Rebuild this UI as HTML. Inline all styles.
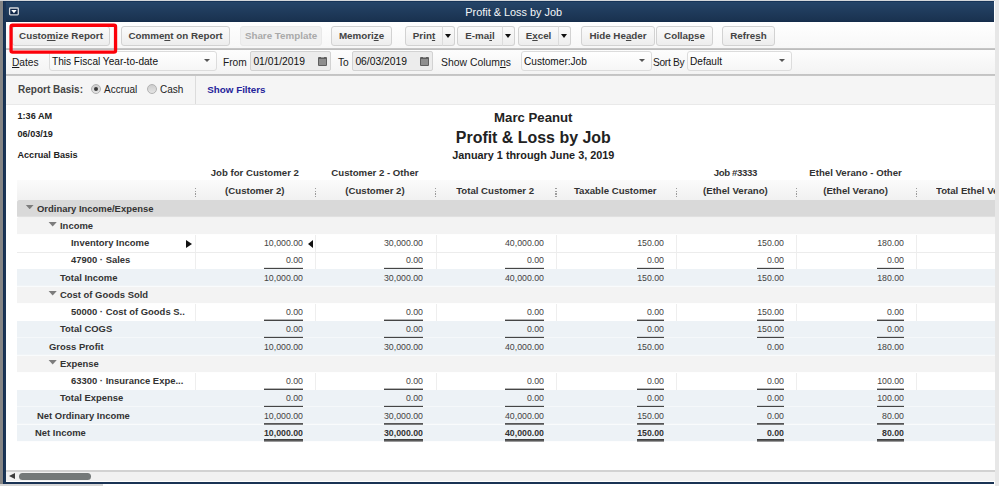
<!DOCTYPE html>
<html>
<head>
<meta charset="utf-8">
<title>Profit &amp; Loss by Job</title>
<style>
html,body{margin:0;padding:0;}
body{width:999px;height:486px;position:relative;overflow:hidden;background:#fff;font-family:"Liberation Sans",Arial,sans-serif;font-size:11px;color:#222;}
.abs{position:absolute;}
#lgray{left:0;top:1px;width:2.7px;height:483px;background:#858585;}
#lnavy{left:2.7px;top:1px;width:3.1px;height:483px;background:linear-gradient(90deg,#0f2a4f,#1b3556 1.2px);}
#topline{left:0;top:0;width:999px;height:1px;background:#d4d7db;}
#titlebar{left:3px;top:1px;width:991.3px;height:21px;background:linear-gradient(#102c50 0,#244468 1.5px,#203c5d 45%,#1a3351 90%,#142b49 100%);box-shadow:0 1px 0 #8e9aab;}
#title{left:413.7px;top:2px;width:200px;height:21px;line-height:21px;text-align:center;color:#f4f6f8;font-size:10.9px;white-space:nowrap;}
#sysicon{left:0;top:0;width:30px;height:22px;}
#tb1{left:6px;top:22px;width:993px;height:26px;background:linear-gradient(#ffffff,#f7f7f7);}
#tb1line{left:6px;top:48px;width:993px;height:2px;background:linear-gradient(#c9c9c9,#b9b9b9);}
#tb2{left:6px;top:50px;width:993px;height:24px;background:linear-gradient(#fdfdfd,#f3f3f3);}
#tb2line{left:6px;top:74px;width:993px;height:2px;background:linear-gradient(#c2c2c2,#c8c8c8);}
#tb3{left:6px;top:76px;width:993px;height:28px;background:#f5f5f5;}
#tb3line{left:6px;top:104px;width:993px;height:1px;background:#e9e9e9;}
.btn{position:absolute;top:26px;height:18px;border:1px solid #d2d2d2;border-radius:3px;background:linear-gradient(#fbfbfb,#ededed);font-weight:bold;font-size:9.8px;line-height:18px;text-align:center;color:#444;box-sizing:content-box;}
.btn.dis{color:#a9a9a9;border-color:#e9e9e9;background:#f0f0f0;}
.btn u{text-decoration:underline;}
.arr{position:absolute;top:26px;height:18px;width:11px;border:1px solid #d2d2d2;border-left:1px solid #dcdcdc;border-radius:0 3px 3px 0;background:linear-gradient(#fbfbfb,#ededed);}
.arr:after{content:"";position:absolute;left:2.3px;top:7.3px;border-left:3px solid transparent;border-right:3px solid transparent;border-top:4px solid #111;}
#redbox{left:0;top:0;width:130px;height:60px;z-index:10;}
.lbl{position:absolute;top:50px;height:24px;line-height:25px;font-size:10.2px;color:#1a1a1a;white-space:nowrap;}
.sel{position:absolute;top:51px;height:20px;border:1px solid #dcdcdc;border-radius:3px;background:linear-gradient(#ffffff,#f6f6f6);font-size:10.1px;line-height:20px;color:#111;padding-left:2px;box-sizing:border-box;white-space:nowrap;}
.sel:after{content:"";position:absolute;right:6px;top:7px;border-left:3px solid transparent;border-right:3px solid transparent;border-top:3.5px solid #555;}
.date{position:absolute;top:51px;height:20px;border:1px solid #d2d2d2;border-radius:2px;background:#ececec;font-size:10.3px;line-height:20px;color:#111;padding-left:2.4px;box-sizing:border-box;white-space:nowrap;}
.cal{position:absolute;right:3.5px;top:4.6px;width:9px;height:9px;background:#5e5e5e;border-radius:1px;}
.cal:before{content:"";position:absolute;left:1px;top:2px;width:7px;height:6px;background:#8e8e8e;}
.cal:after{content:"";position:absolute;left:3px;top:0;width:3px;height:1px;background:#9a9a9a;}
.t3{position:absolute;top:75.5px;height:27px;line-height:27px;font-size:10px;white-space:nowrap;}
.radio{position:absolute;top:83.8px;width:8px;height:8px;border:1px solid #b2b2b2;border-radius:50%;background:linear-gradient(#cdcdcd,#e4e4e4);}
.radio.on:after{content:"";position:absolute;left:2px;top:2px;width:4px;height:4px;border-radius:50%;background:#3a3a3a;}
#vsep{left:195px;top:76px;width:1px;height:28px;background:#dcdcdc;}
.meta{position:absolute;left:17.5px;font-size:9.1px;font-weight:bold;color:#222;white-space:nowrap;}
.ttl{position:absolute;left:283.3px;width:500px;text-align:center;font-weight:bold;color:#222;white-space:nowrap;}
#hdrbg{left:17px;top:180px;width:982px;height:20px;background:linear-gradient(#fbfbfb,#f1f1f1);}
.ch{position:absolute;width:120px;text-align:center;font-weight:bold;font-size:9.65px;color:#333;white-space:nowrap;height:17px;line-height:17px;}
.dots{position:absolute;top:188px;width:1.2px;height:10px;background:linear-gradient(transparent 0.1px,#9c9c9c 0.1px,#9c9c9c 1.3px,transparent 1.3px,transparent 2.7px,#9c9c9c 2.7px,#9c9c9c 3.9px,transparent 3.9px,transparent 5.3px,#9c9c9c 5.3px,#9c9c9c 6.5px,transparent 6.5px,transparent 7.9px,#9c9c9c 7.9px,#9c9c9c 9.1px,transparent 9.1px);}
.row{position:absolute;left:17px;width:978px;}
.lab{position:absolute;top:0;height:17px;line-height:17px;font-weight:bold;font-size:9.45px;color:#333;white-space:nowrap;}
.n{position:absolute;top:0;height:17px;line-height:17px;font-size:9.7px;transform:scaleX(0.905);transform-origin:100% 50%;color:#444;text-align:right;width:80px;white-space:nowrap;}
.tri{position:absolute;width:8.6px;height:4.8px;background:#7c7c7c;clip-path:polygon(0 0,100% 0,50% 100%);}
.ul{position:absolute;height:1px;background:#454545;}
.gp{position:absolute;left:17px;width:978px;height:1px;background:#fff;}
.vs{position:absolute;width:1px;background:#eeeeee;}
.hl{position:absolute;left:17px;width:978px;height:1px;background:#ececec;}
.rarr{position:absolute;border-top:4.5px solid transparent;border-bottom:4.5px solid transparent;border-left:6px solid #111;}
.larr{position:absolute;border-top:4.5px solid transparent;border-bottom:4.5px solid transparent;border-right:5px solid #111;}
#hs1{left:6px;top:470px;width:989px;height:2px;background:#d2d2d2;}
#hs{left:6px;top:472px;width:989px;height:9px;background:#f1f1f1;}
#hsthumb{left:19px;top:473px;width:72px;height:7px;border-radius:4px;background:#747979;}
#hsarrow{left:9.4px;top:472.6px;border-top:3.6px solid transparent;border-bottom:3.6px solid transparent;border-right:6.4px solid #3c3c3c;}
#botnavy{left:3px;top:482px;width:991.3px;height:2px;background:#1a3354;}
#botgray{left:0;top:484px;width:103px;height:2px;background:#d6d6d6;}
#rstrip{left:994.6px;top:0;width:5px;height:486px;background:#e7e7e7;}
</style>
</head>
<body>
<div class="abs" id="topline"></div>
<div class="abs" id="titlebar"></div>
<div class="abs" id="title">Profit &amp; Loss by Job</div>
<svg class="abs" id="sysicon" width="30" height="22" viewBox="0 0 30 22"><rect x="9.6" y="8" width="8.7" height="6.9" rx="0.8" fill="#0f2648" stroke="#d3d7dc" stroke-width="1.3"/><polygon points="11.2,10.1 16.7,10.1 13.95,13.2" fill="#ffffff"/></svg>
<div class="abs" id="tb1"></div>
<div class="abs" id="tb1line"></div>
<div class="abs" id="tb2"></div>
<div class="abs" id="tb2line"></div>
<div class="abs" id="tb3"></div>
<div class="abs" id="tb3line"></div>

<!-- toolbar buttons -->
<div class="btn" style="left:12px;width:96px;">Custo<u>m</u>ize Report</div>
<div class="btn" style="left:121px;width:107px;">Comme<u>n</u>t on Report</div>
<div class="btn dis" style="left:240px;width:80px;">Share Template</div>
<div class="btn" style="left:331px;width:59px;">Memori<u>z</u>e</div>
<div class="btn" style="left:405px;width:36px;border-radius:3px 0 0 3px;">Prin<u>t</u></div><div class="arr" style="left:442px;"></div>
<div class="btn" style="left:457px;width:44px;border-radius:3px 0 0 3px;">E-ma<u>i</u>l</div><div class="arr" style="left:502px;"></div>
<div class="btn" style="left:518px;width:39px;border-radius:3px 0 0 3px;">E<u>x</u>cel</div><div class="arr" style="left:558px;"></div>
<div class="btn" style="left:581px;width:72px;">Hide He<u>a</u>der</div>
<div class="btn" style="left:656px;width:55px;">Colla<u>p</u>se</div>
<div class="btn" style="left:722px;width:51px;">Refre<u>s</u>h</div>
<svg class="abs" id="redbox" width="130" height="60" viewBox="0 0 130 60"><rect x="11.05" y="25.25" width="104.5" height="26.9" rx="1.6" ry="1.6" fill="none" stroke="#fc0009" stroke-width="3.3"/></svg>

<!-- second row -->
<div class="lbl" style="left:12px;"><u>D</u>ates</div>
<div class="sel" style="left:49px;width:168px;">This Fiscal Year-to-date</div>
<div class="lbl" style="left:223px;">From</div>
<div class="date" style="left:250px;width:81px;">01/01/2019<span class="cal"></span></div>
<div class="lbl" style="left:338px;">To</div>
<div class="date" style="left:352px;width:81px;">06/03/2019<span class="cal"></span></div>
<div class="lbl" style="left:441px;font-size:10.4px;">Show Colum<u>n</u>s</div>
<div class="sel" style="left:521px;width:131px;">Customer:Job</div>
<div class="lbl" style="left:653px;letter-spacing:-0.3px;">Sort By</div>
<div class="sel" style="left:687px;width:105px;">Default</div>

<!-- third row -->
<div class="t3" style="left:18px;font-weight:bold;color:#444;">Report Basis:</div>
<div class="radio on" style="left:91px;"></div>
<div class="t3" style="left:104px;">Accrual</div>
<div class="radio" style="left:147px;"></div>
<div class="t3" style="left:160px;">Cash</div>
<div class="abs" id="vsep"></div>
<div class="t3" style="left:207.3px;top:76.4px;font-size:9.8px;font-weight:bold;color:#25239a;">Show Filters</div>

<!-- report header -->
<div class="meta" style="top:109.8px;line-height:12px;">1:36 AM</div>
<div class="meta" style="top:127.8px;line-height:12px;">06/03/19</div>
<div class="meta" style="top:148.8px;line-height:12px;">Accrual Basis</div>
<div class="ttl" style="top:110.3px;line-height:16px;font-size:13.2px;">Marc Peanut</div>
<div class="ttl" style="top:127.9px;line-height:20px;font-size:15.95px;">Profit &amp; Loss by Job</div>
<div class="ttl" style="top:147.8px;line-height:14px;font-size:10.85px;">January 1 through June 3, 2019</div>

<div class="abs" id="hdrbg"></div>
<div class="dots" style="left:195.0px;"></div>
<div class="ch" style="left:194.8px;top:164.3px;">Job for Customer 2</div>
<div class="ch" style="left:194.8px;top:182px;">(Customer 2)</div>
<div class="dots" style="left:315.15px;"></div>
<div class="ch" style="left:314.95px;top:164.3px;">Customer 2 - Other</div>
<div class="ch" style="left:314.95px;top:182px;">(Customer 2)</div>
<div class="dots" style="left:435.3px;"></div>
<div class="ch" style="left:435.1px;top:182px;">Total Customer 2</div>
<div class="dots" style="left:555.45px;"></div>
<div class="ch" style="left:555.25px;top:182px;">Taxable Customer</div>
<div class="dots" style="left:675.6px;"></div>
<div class="ch" style="left:675.4px;top:164.3px;letter-spacing:-0.35px;">Job #3333</div>
<div class="ch" style="left:675.4px;top:182px;">(Ethel Verano)</div>
<div class="dots" style="left:795.75px;"></div>
<div class="ch" style="left:795.55px;top:164.3px;">Ethel Verano - Other</div>
<div class="ch" style="left:795.55px;top:182px;">(Ethel Verano)</div>
<div class="dots" style="left:915.9px;"></div>
<div class="ch" style="left:936px;top:182px;text-align:left;width:59px;overflow:hidden;">Total Ethel Ve</div>
<div class="row" style="top:200px;height:18px;background:#d9d9d9;border-radius:2px 0 0 2px;"></div>
<i class="gp" style="top:216px;opacity:0.2;"></i>
<i class="gp" style="top:217px;opacity:0.65;"></i>
<i class="tri" style="left:25.4px;top:204.5px;"></i>
<span class="lab" style="left:37px;top:200px;">Ordinary Income/Expense</span>
<div class="row" style="top:218px;height:17px;background:#f3f3f3;"></div>
<i class="gp" style="top:234px;opacity:0.85;"></i>
<i class="tri" style="left:48.4px;top:221.8px;"></i>
<span class="lab" style="left:60px;top:217px;">Income</span>
<div class="row" style="top:235px;height:17px;background:#ffffff;"></div>
<i class="gp" style="top:251px;opacity:0.7;"></i>
<i class="gp" style="top:252px;opacity:0.15;"></i>
<i class="vs" style="left:195px;top:235px;height:17px;"></i>
<i class="vs" style="left:315px;top:235px;height:17px;"></i>
<i class="vs" style="left:436px;top:235px;height:17px;"></i>
<i class="vs" style="left:556px;top:235px;height:17px;"></i>
<i class="vs" style="left:676px;top:235px;height:17px;"></i>
<i class="vs" style="left:796px;top:235px;height:17px;"></i>
<i class="vs" style="left:916px;top:235px;height:17px;"></i>
<span class="lab" style="left:71px;top:234px;">Inventory Income</span>
<span class="n" style="left:223.2px;top:234px;">10,000.00</span>
<span class="n" style="left:343.35px;top:234px;">30,000.00</span>
<span class="n" style="left:463.5px;top:234px;">40,000.00</span>
<span class="n" style="left:583.65px;top:234px;">150.00</span>
<span class="n" style="left:703.8px;top:234px;">150.00</span>
<span class="n" style="left:823.95px;top:234px;">180.00</span>
<i class="rarr" style="left:186px;top:239.6px;"></i>
<i class="larr" style="left:308px;top:239.6px;"></i>
<div class="row" style="top:252px;height:17px;background:#ffffff;"></div>
<i class="gp" style="top:268px;opacity:0.45;"></i>
<i class="gp" style="top:269px;opacity:0.4;"></i>
<i class="vs" style="left:195px;top:252px;height:17px;"></i>
<i class="vs" style="left:315px;top:252px;height:17px;"></i>
<i class="vs" style="left:436px;top:252px;height:17px;"></i>
<i class="vs" style="left:556px;top:252px;height:17px;"></i>
<i class="vs" style="left:676px;top:252px;height:17px;"></i>
<i class="vs" style="left:796px;top:252px;height:17px;"></i>
<i class="vs" style="left:916px;top:252px;height:17px;"></i>
<span class="lab" style="left:71px;top:251px;">47900 · Sales</span>
<span class="n" style="left:223.2px;top:251px;">0.00</span>
<i class="ul" style="left:264.2px;top:267px;width:39px;opacity:0.15;"></i>
<i class="ul" style="left:264.2px;top:268px;width:39px;opacity:1;"></i>
<i class="ul" style="left:264.2px;top:269px;width:39px;opacity:0.45;"></i>
<span class="n" style="left:343.35px;top:251px;">0.00</span>
<i class="ul" style="left:384.35px;top:267px;width:39px;opacity:0.15;"></i>
<i class="ul" style="left:384.35px;top:268px;width:39px;opacity:1;"></i>
<i class="ul" style="left:384.35px;top:269px;width:39px;opacity:0.45;"></i>
<span class="n" style="left:463.5px;top:251px;">0.00</span>
<i class="ul" style="left:504.5px;top:267px;width:39px;opacity:0.15;"></i>
<i class="ul" style="left:504.5px;top:268px;width:39px;opacity:1;"></i>
<i class="ul" style="left:504.5px;top:269px;width:39px;opacity:0.45;"></i>
<span class="n" style="left:583.65px;top:251px;">0.00</span>
<i class="ul" style="left:637.15px;top:267px;width:26.5px;opacity:0.15;"></i>
<i class="ul" style="left:637.15px;top:268px;width:26.5px;opacity:1;"></i>
<i class="ul" style="left:637.15px;top:269px;width:26.5px;opacity:0.45;"></i>
<span class="n" style="left:703.8px;top:251px;">0.00</span>
<i class="ul" style="left:757.3px;top:267px;width:26.5px;opacity:0.15;"></i>
<i class="ul" style="left:757.3px;top:268px;width:26.5px;opacity:1;"></i>
<i class="ul" style="left:757.3px;top:269px;width:26.5px;opacity:0.45;"></i>
<span class="n" style="left:823.95px;top:251px;">0.00</span>
<i class="ul" style="left:877.45px;top:267px;width:26.5px;opacity:0.15;"></i>
<i class="ul" style="left:877.45px;top:268px;width:26.5px;opacity:1;"></i>
<i class="ul" style="left:877.45px;top:269px;width:26.5px;opacity:0.45;"></i>
<div class="row" style="top:269px;height:18px;background:#edf2f6;"></div>
<i class="gp" style="top:285px;opacity:0.2;"></i>
<i class="gp" style="top:286px;opacity:0.65;"></i>
<span class="lab" style="left:60px;top:269px;">Total Income</span>
<span class="n" style="left:223.2px;top:269px;">10,000.00</span>
<span class="n" style="left:343.35px;top:269px;">30,000.00</span>
<span class="n" style="left:463.5px;top:269px;">40,000.00</span>
<span class="n" style="left:583.65px;top:269px;">150.00</span>
<span class="n" style="left:703.8px;top:269px;">150.00</span>
<span class="n" style="left:823.95px;top:269px;">180.00</span>
<div class="row" style="top:287px;height:17px;background:#f3f3f3;"></div>
<i class="gp" style="top:303px;opacity:0.85;"></i>
<i class="tri" style="left:48.4px;top:290.8px;"></i>
<span class="lab" style="left:60px;top:286px;">Cost of Goods Sold</span>
<div class="row" style="top:304px;height:17px;background:#ffffff;"></div>
<i class="gp" style="top:320px;opacity:0.7;"></i>
<i class="gp" style="top:321px;opacity:0.15;"></i>
<i class="vs" style="left:195px;top:304px;height:17px;"></i>
<i class="vs" style="left:315px;top:304px;height:17px;"></i>
<i class="vs" style="left:436px;top:304px;height:17px;"></i>
<i class="vs" style="left:556px;top:304px;height:17px;"></i>
<i class="vs" style="left:676px;top:304px;height:17px;"></i>
<i class="vs" style="left:796px;top:304px;height:17px;"></i>
<i class="vs" style="left:916px;top:304px;height:17px;"></i>
<span class="lab" style="left:71px;top:303px;">50000 · Cost of Goods S..</span>
<span class="n" style="left:223.2px;top:303px;">0.00</span>
<i class="ul" style="left:264.2px;top:319px;width:39px;opacity:0.4;"></i>
<i class="ul" style="left:264.2px;top:320px;width:39px;opacity:1;"></i>
<i class="ul" style="left:264.2px;top:321px;width:39px;opacity:0.2;"></i>
<span class="n" style="left:343.35px;top:303px;">0.00</span>
<i class="ul" style="left:384.35px;top:319px;width:39px;opacity:0.4;"></i>
<i class="ul" style="left:384.35px;top:320px;width:39px;opacity:1;"></i>
<i class="ul" style="left:384.35px;top:321px;width:39px;opacity:0.2;"></i>
<span class="n" style="left:463.5px;top:303px;">0.00</span>
<i class="ul" style="left:504.5px;top:319px;width:39px;opacity:0.4;"></i>
<i class="ul" style="left:504.5px;top:320px;width:39px;opacity:1;"></i>
<i class="ul" style="left:504.5px;top:321px;width:39px;opacity:0.2;"></i>
<span class="n" style="left:583.65px;top:303px;">0.00</span>
<i class="ul" style="left:637.15px;top:319px;width:26.5px;opacity:0.4;"></i>
<i class="ul" style="left:637.15px;top:320px;width:26.5px;opacity:1;"></i>
<i class="ul" style="left:637.15px;top:321px;width:26.5px;opacity:0.2;"></i>
<span class="n" style="left:703.8px;top:303px;">150.00</span>
<i class="ul" style="left:757.3px;top:319px;width:26.5px;opacity:0.4;"></i>
<i class="ul" style="left:757.3px;top:320px;width:26.5px;opacity:1;"></i>
<i class="ul" style="left:757.3px;top:321px;width:26.5px;opacity:0.2;"></i>
<span class="n" style="left:823.95px;top:303px;">0.00</span>
<i class="ul" style="left:877.45px;top:319px;width:26.5px;opacity:0.4;"></i>
<i class="ul" style="left:877.45px;top:320px;width:26.5px;opacity:1;"></i>
<i class="ul" style="left:877.45px;top:321px;width:26.5px;opacity:0.2;"></i>
<div class="row" style="top:321px;height:17px;background:#edf2f6;"></div>
<i class="gp" style="top:337px;opacity:0.45;"></i>
<i class="gp" style="top:338px;opacity:0.4;"></i>
<span class="lab" style="left:60px;top:320px;">Total COGS</span>
<span class="n" style="left:223.2px;top:320px;">0.00</span>
<i class="ul" style="left:264.2px;top:336px;width:39px;opacity:0.15;"></i>
<i class="ul" style="left:264.2px;top:337px;width:39px;opacity:1;"></i>
<i class="ul" style="left:264.2px;top:338px;width:39px;opacity:0.45;"></i>
<span class="n" style="left:343.35px;top:320px;">0.00</span>
<i class="ul" style="left:384.35px;top:336px;width:39px;opacity:0.15;"></i>
<i class="ul" style="left:384.35px;top:337px;width:39px;opacity:1;"></i>
<i class="ul" style="left:384.35px;top:338px;width:39px;opacity:0.45;"></i>
<span class="n" style="left:463.5px;top:320px;">0.00</span>
<i class="ul" style="left:504.5px;top:336px;width:39px;opacity:0.15;"></i>
<i class="ul" style="left:504.5px;top:337px;width:39px;opacity:1;"></i>
<i class="ul" style="left:504.5px;top:338px;width:39px;opacity:0.45;"></i>
<span class="n" style="left:583.65px;top:320px;">0.00</span>
<i class="ul" style="left:637.15px;top:336px;width:26.5px;opacity:0.15;"></i>
<i class="ul" style="left:637.15px;top:337px;width:26.5px;opacity:1;"></i>
<i class="ul" style="left:637.15px;top:338px;width:26.5px;opacity:0.45;"></i>
<span class="n" style="left:703.8px;top:320px;">150.00</span>
<i class="ul" style="left:757.3px;top:336px;width:26.5px;opacity:0.15;"></i>
<i class="ul" style="left:757.3px;top:337px;width:26.5px;opacity:1;"></i>
<i class="ul" style="left:757.3px;top:338px;width:26.5px;opacity:0.45;"></i>
<span class="n" style="left:823.95px;top:320px;">0.00</span>
<i class="ul" style="left:877.45px;top:336px;width:26.5px;opacity:0.15;"></i>
<i class="ul" style="left:877.45px;top:337px;width:26.5px;opacity:1;"></i>
<i class="ul" style="left:877.45px;top:338px;width:26.5px;opacity:0.45;"></i>
<div class="row" style="top:338px;height:18px;background:#edf2f6;"></div>
<i class="gp" style="top:354px;opacity:0.2;"></i>
<i class="gp" style="top:355px;opacity:0.65;"></i>
<span class="lab" style="left:49px;top:338px;">Gross Profit</span>
<span class="n" style="left:223.2px;top:338px;">10,000.00</span>
<span class="n" style="left:343.35px;top:338px;">30,000.00</span>
<span class="n" style="left:463.5px;top:338px;">40,000.00</span>
<span class="n" style="left:583.65px;top:338px;">150.00</span>
<span class="n" style="left:703.8px;top:338px;">0.00</span>
<span class="n" style="left:823.95px;top:338px;">180.00</span>
<div class="row" style="top:356px;height:17px;background:#f3f3f3;"></div>
<i class="gp" style="top:372px;opacity:0.85;"></i>
<i class="tri" style="left:48.4px;top:359.8px;"></i>
<span class="lab" style="left:60px;top:355px;">Expense</span>
<div class="row" style="top:373px;height:17px;background:#ffffff;"></div>
<i class="gp" style="top:389px;opacity:0.7;"></i>
<i class="gp" style="top:390px;opacity:0.15;"></i>
<i class="vs" style="left:195px;top:373px;height:17px;"></i>
<i class="vs" style="left:315px;top:373px;height:17px;"></i>
<i class="vs" style="left:436px;top:373px;height:17px;"></i>
<i class="vs" style="left:556px;top:373px;height:17px;"></i>
<i class="vs" style="left:676px;top:373px;height:17px;"></i>
<i class="vs" style="left:796px;top:373px;height:17px;"></i>
<i class="vs" style="left:916px;top:373px;height:17px;"></i>
<span class="lab" style="left:71px;top:372px;">63300 · Insurance Expe...</span>
<span class="n" style="left:223.2px;top:372px;">0.00</span>
<i class="ul" style="left:264.2px;top:388px;width:39px;opacity:0.4;"></i>
<i class="ul" style="left:264.2px;top:389px;width:39px;opacity:1;"></i>
<i class="ul" style="left:264.2px;top:390px;width:39px;opacity:0.2;"></i>
<span class="n" style="left:343.35px;top:372px;">0.00</span>
<i class="ul" style="left:384.35px;top:388px;width:39px;opacity:0.4;"></i>
<i class="ul" style="left:384.35px;top:389px;width:39px;opacity:1;"></i>
<i class="ul" style="left:384.35px;top:390px;width:39px;opacity:0.2;"></i>
<span class="n" style="left:463.5px;top:372px;">0.00</span>
<i class="ul" style="left:504.5px;top:388px;width:39px;opacity:0.4;"></i>
<i class="ul" style="left:504.5px;top:389px;width:39px;opacity:1;"></i>
<i class="ul" style="left:504.5px;top:390px;width:39px;opacity:0.2;"></i>
<span class="n" style="left:583.65px;top:372px;">0.00</span>
<i class="ul" style="left:637.15px;top:388px;width:26.5px;opacity:0.4;"></i>
<i class="ul" style="left:637.15px;top:389px;width:26.5px;opacity:1;"></i>
<i class="ul" style="left:637.15px;top:390px;width:26.5px;opacity:0.2;"></i>
<span class="n" style="left:703.8px;top:372px;">0.00</span>
<i class="ul" style="left:757.3px;top:388px;width:26.5px;opacity:0.4;"></i>
<i class="ul" style="left:757.3px;top:389px;width:26.5px;opacity:1;"></i>
<i class="ul" style="left:757.3px;top:390px;width:26.5px;opacity:0.2;"></i>
<span class="n" style="left:823.95px;top:372px;">100.00</span>
<i class="ul" style="left:877.45px;top:388px;width:26.5px;opacity:0.4;"></i>
<i class="ul" style="left:877.45px;top:389px;width:26.5px;opacity:1;"></i>
<i class="ul" style="left:877.45px;top:390px;width:26.5px;opacity:0.2;"></i>
<div class="row" style="top:390px;height:17px;background:#edf2f6;"></div>
<i class="gp" style="top:406px;opacity:0.45;"></i>
<i class="gp" style="top:407px;opacity:0.4;"></i>
<span class="lab" style="left:60px;top:389px;">Total Expense</span>
<span class="n" style="left:223.2px;top:389px;">0.00</span>
<i class="ul" style="left:264.2px;top:405px;width:39px;opacity:0.15;"></i>
<i class="ul" style="left:264.2px;top:406px;width:39px;opacity:1;"></i>
<i class="ul" style="left:264.2px;top:407px;width:39px;opacity:0.45;"></i>
<span class="n" style="left:343.35px;top:389px;">0.00</span>
<i class="ul" style="left:384.35px;top:405px;width:39px;opacity:0.15;"></i>
<i class="ul" style="left:384.35px;top:406px;width:39px;opacity:1;"></i>
<i class="ul" style="left:384.35px;top:407px;width:39px;opacity:0.45;"></i>
<span class="n" style="left:463.5px;top:389px;">0.00</span>
<i class="ul" style="left:504.5px;top:405px;width:39px;opacity:0.15;"></i>
<i class="ul" style="left:504.5px;top:406px;width:39px;opacity:1;"></i>
<i class="ul" style="left:504.5px;top:407px;width:39px;opacity:0.45;"></i>
<span class="n" style="left:583.65px;top:389px;">0.00</span>
<i class="ul" style="left:637.15px;top:405px;width:26.5px;opacity:0.15;"></i>
<i class="ul" style="left:637.15px;top:406px;width:26.5px;opacity:1;"></i>
<i class="ul" style="left:637.15px;top:407px;width:26.5px;opacity:0.45;"></i>
<span class="n" style="left:703.8px;top:389px;">0.00</span>
<i class="ul" style="left:757.3px;top:405px;width:26.5px;opacity:0.15;"></i>
<i class="ul" style="left:757.3px;top:406px;width:26.5px;opacity:1;"></i>
<i class="ul" style="left:757.3px;top:407px;width:26.5px;opacity:0.45;"></i>
<span class="n" style="left:823.95px;top:389px;">100.00</span>
<i class="ul" style="left:877.45px;top:405px;width:26.5px;opacity:0.15;"></i>
<i class="ul" style="left:877.45px;top:406px;width:26.5px;opacity:1;"></i>
<i class="ul" style="left:877.45px;top:407px;width:26.5px;opacity:0.45;"></i>
<div class="row" style="top:407px;height:18px;background:#edf2f6;"></div>
<i class="gp" style="top:423px;opacity:0.2;"></i>
<i class="gp" style="top:424px;opacity:0.65;"></i>
<span class="lab" style="left:37px;top:407px;">Net Ordinary Income</span>
<span class="n" style="left:223.2px;top:407px;">10,000.00</span>
<i class="ul" style="left:264.2px;top:423px;width:39px;opacity:0.9;"></i>
<i class="ul" style="left:264.2px;top:424px;width:39px;opacity:0.7;"></i>
<span class="n" style="left:343.35px;top:407px;">30,000.00</span>
<i class="ul" style="left:384.35px;top:423px;width:39px;opacity:0.9;"></i>
<i class="ul" style="left:384.35px;top:424px;width:39px;opacity:0.7;"></i>
<span class="n" style="left:463.5px;top:407px;">40,000.00</span>
<i class="ul" style="left:504.5px;top:423px;width:39px;opacity:0.9;"></i>
<i class="ul" style="left:504.5px;top:424px;width:39px;opacity:0.7;"></i>
<span class="n" style="left:583.65px;top:407px;">150.00</span>
<i class="ul" style="left:637.15px;top:423px;width:26.5px;opacity:0.9;"></i>
<i class="ul" style="left:637.15px;top:424px;width:26.5px;opacity:0.7;"></i>
<span class="n" style="left:703.8px;top:407px;">0.00</span>
<i class="ul" style="left:757.3px;top:423px;width:26.5px;opacity:0.9;"></i>
<i class="ul" style="left:757.3px;top:424px;width:26.5px;opacity:0.7;"></i>
<span class="n" style="left:823.95px;top:407px;">80.00</span>
<i class="ul" style="left:877.45px;top:423px;width:26.5px;opacity:0.9;"></i>
<i class="ul" style="left:877.45px;top:424px;width:26.5px;opacity:0.7;"></i>
<div class="row" style="top:425px;height:17px;background:#edf2f6;"></div>
<i class="gp" style="top:441px;opacity:0.85;"></i>
<span class="lab" style="left:35px;top:424px;">Net Income</span>
<span class="n" style="left:223.2px;top:424px;font-weight:bold;color:#333;">10,000.00</span>
<i class="ul" style="left:264.2px;top:439px;width:39px;opacity:1.0;background:#5a5a5a;"></i>
<i class="ul" style="left:264.2px;top:440px;width:39px;opacity:1;background:#5a5a5a;"></i>
<i class="ul" style="left:264.2px;top:441px;width:39px;opacity:0.6;background:#5a5a5a;"></i>
<i class="ul" style="left:264.2px;top:439px;width:39px;opacity:1.0;background:#404040;"></i>
<span class="n" style="left:343.35px;top:424px;font-weight:bold;color:#333;">30,000.00</span>
<i class="ul" style="left:384.35px;top:439px;width:39px;opacity:1.0;background:#5a5a5a;"></i>
<i class="ul" style="left:384.35px;top:440px;width:39px;opacity:1;background:#5a5a5a;"></i>
<i class="ul" style="left:384.35px;top:441px;width:39px;opacity:0.6;background:#5a5a5a;"></i>
<i class="ul" style="left:384.35px;top:439px;width:39px;opacity:1.0;background:#404040;"></i>
<span class="n" style="left:463.5px;top:424px;font-weight:bold;color:#333;">40,000.00</span>
<i class="ul" style="left:504.5px;top:439px;width:39px;opacity:1.0;background:#5a5a5a;"></i>
<i class="ul" style="left:504.5px;top:440px;width:39px;opacity:1;background:#5a5a5a;"></i>
<i class="ul" style="left:504.5px;top:441px;width:39px;opacity:0.6;background:#5a5a5a;"></i>
<i class="ul" style="left:504.5px;top:439px;width:39px;opacity:1.0;background:#404040;"></i>
<span class="n" style="left:583.65px;top:424px;font-weight:bold;color:#333;">150.00</span>
<i class="ul" style="left:637.15px;top:439px;width:26.5px;opacity:1.0;background:#5a5a5a;"></i>
<i class="ul" style="left:637.15px;top:440px;width:26.5px;opacity:1;background:#5a5a5a;"></i>
<i class="ul" style="left:637.15px;top:441px;width:26.5px;opacity:0.6;background:#5a5a5a;"></i>
<i class="ul" style="left:637.15px;top:439px;width:26.5px;opacity:1.0;background:#404040;"></i>
<span class="n" style="left:703.8px;top:424px;font-weight:bold;color:#333;">0.00</span>
<i class="ul" style="left:757.3px;top:439px;width:26.5px;opacity:1.0;background:#5a5a5a;"></i>
<i class="ul" style="left:757.3px;top:440px;width:26.5px;opacity:1;background:#5a5a5a;"></i>
<i class="ul" style="left:757.3px;top:441px;width:26.5px;opacity:0.6;background:#5a5a5a;"></i>
<i class="ul" style="left:757.3px;top:439px;width:26.5px;opacity:1.0;background:#404040;"></i>
<span class="n" style="left:823.95px;top:424px;font-weight:bold;color:#333;">80.00</span>
<i class="ul" style="left:877.45px;top:439px;width:26.5px;opacity:1.0;background:#5a5a5a;"></i>
<i class="ul" style="left:877.45px;top:440px;width:26.5px;opacity:1;background:#5a5a5a;"></i>
<i class="ul" style="left:877.45px;top:441px;width:26.5px;opacity:0.6;background:#5a5a5a;"></i>
<i class="ul" style="left:877.45px;top:439px;width:26.5px;opacity:1.0;background:#404040;"></i>
<i class="hl" style="top:252px;"></i>

<div class="abs" id="hs1"></div>
<div class="abs" id="hs"></div>
<div class="abs" id="hsthumb"></div>
<div class="abs" id="hsarrow"></div>
<div class="abs" id="botnavy"></div>
<div class="abs" id="botgray"></div>
<div class="abs" id="rstrip"></div>
<div class="abs" id="lgray"></div>
<div class="abs" id="lnavy"></div>
</body>
</html>
